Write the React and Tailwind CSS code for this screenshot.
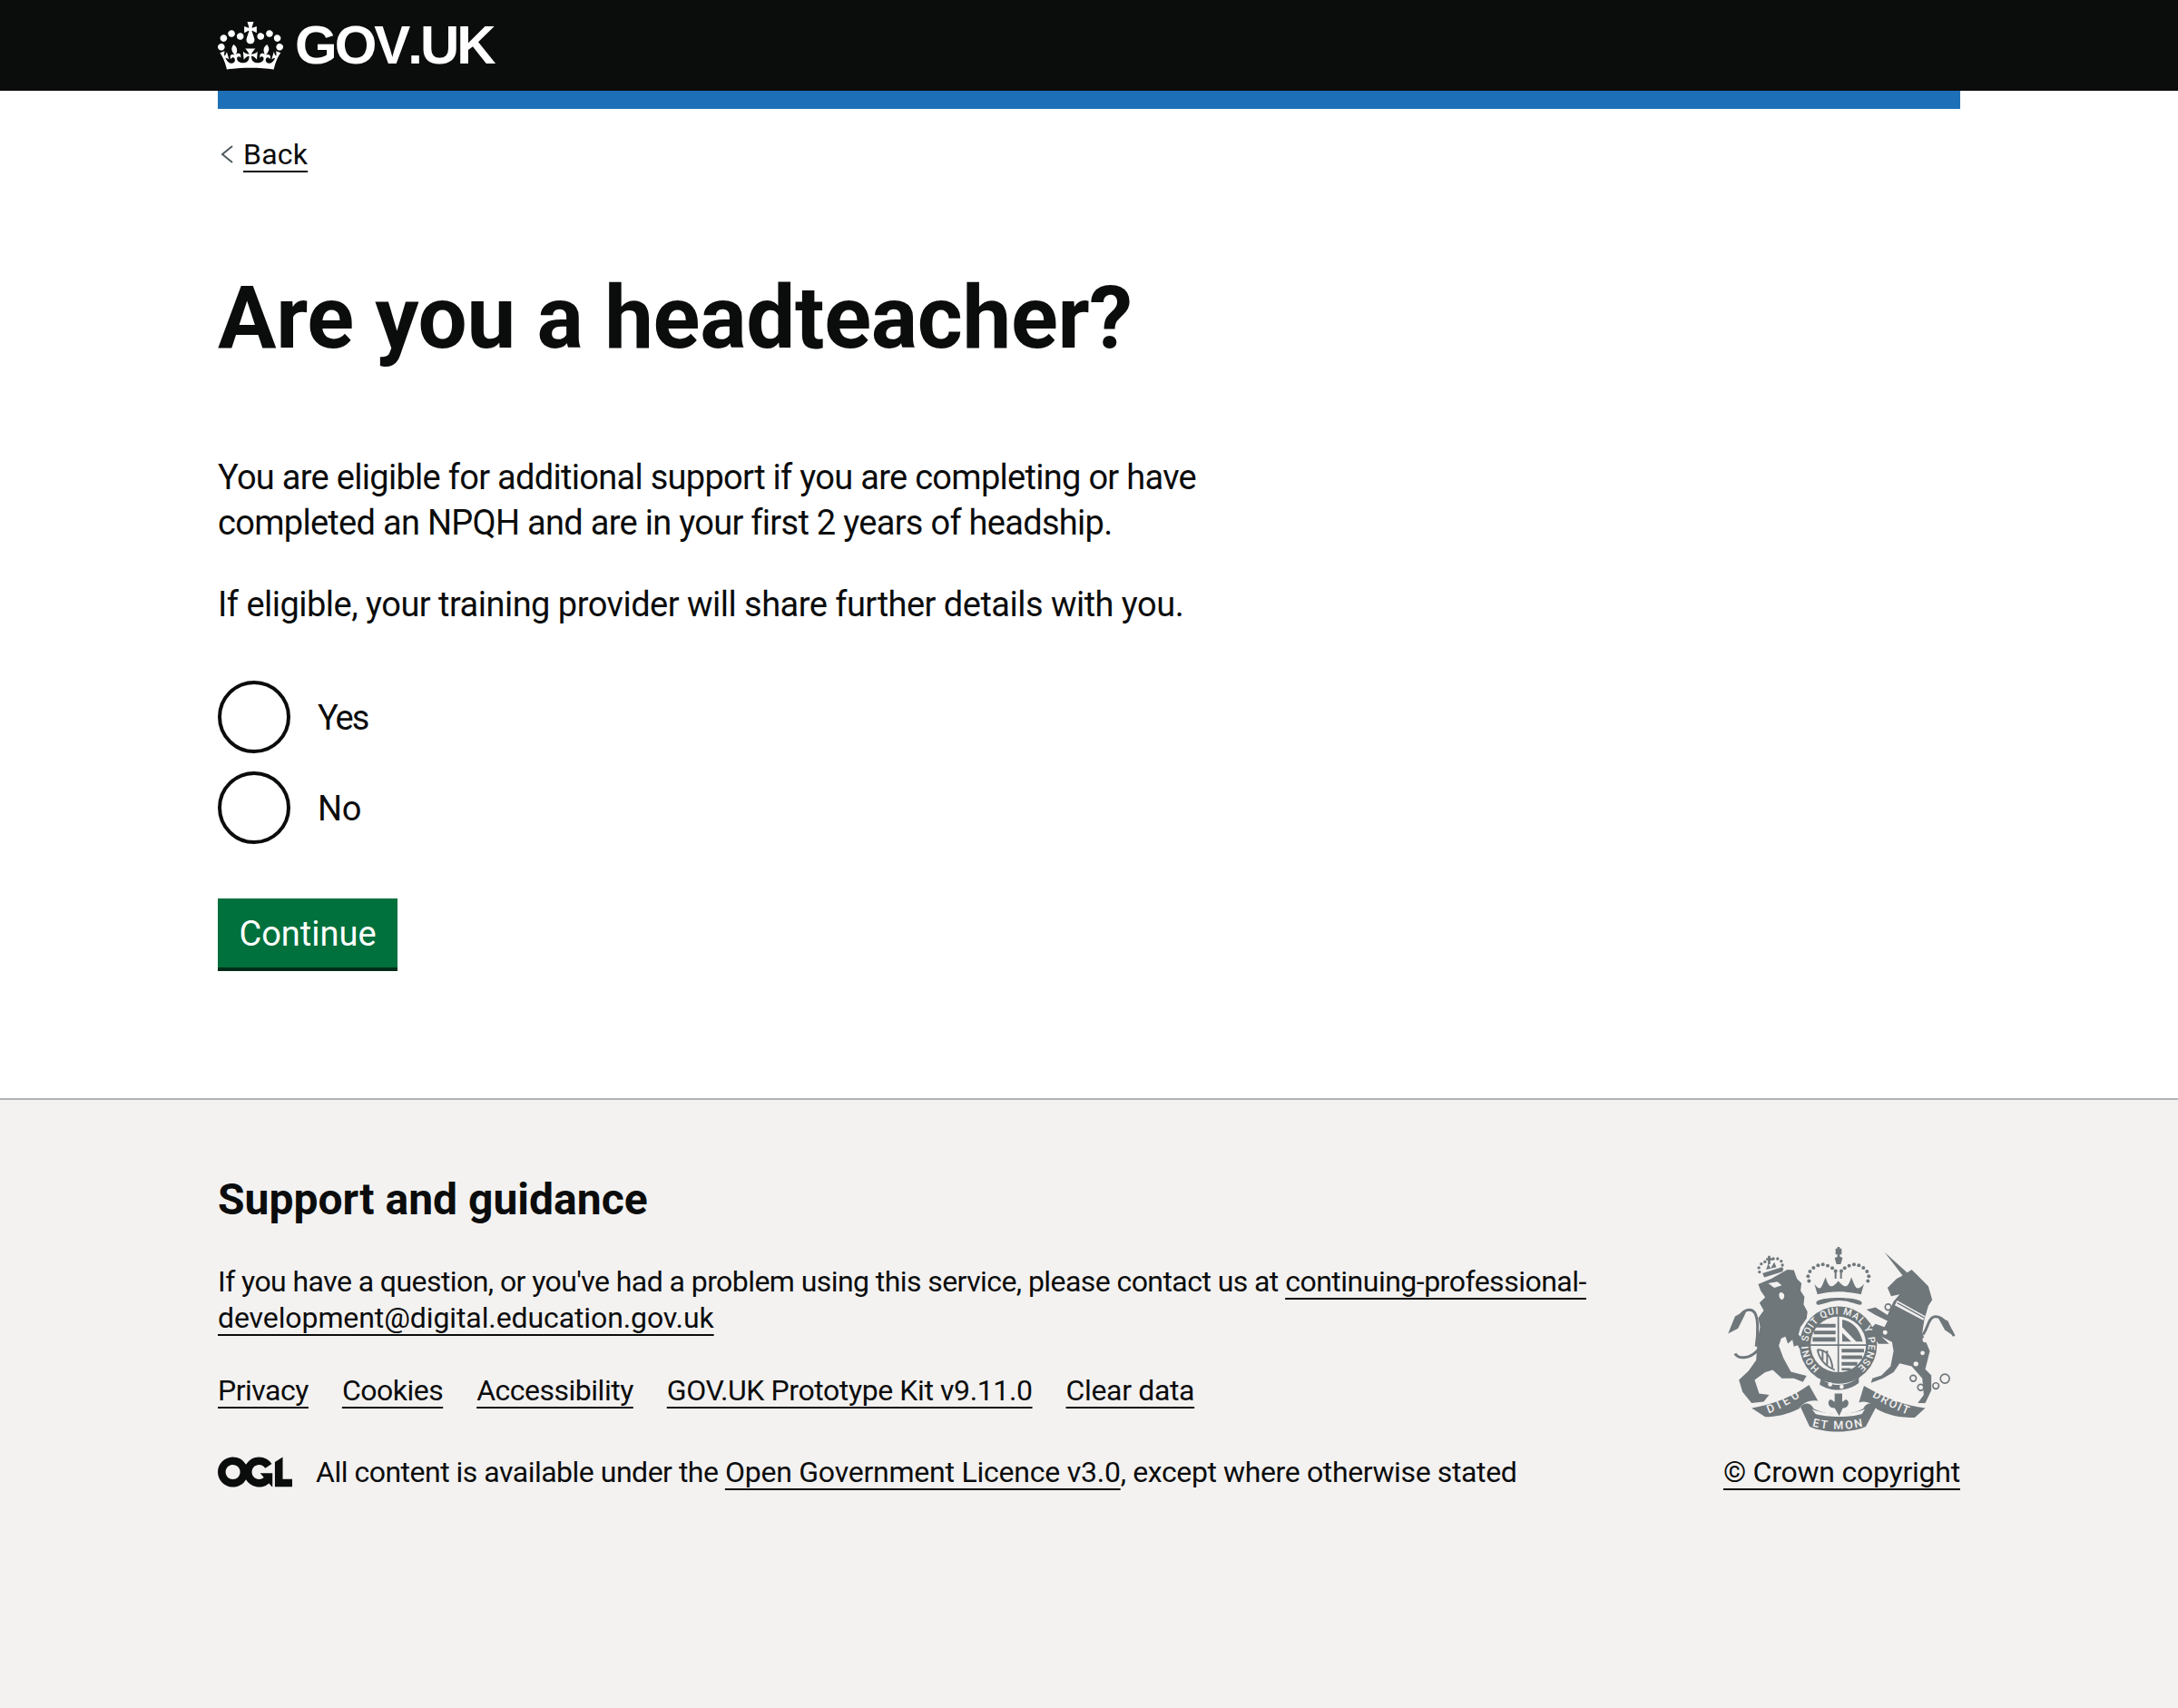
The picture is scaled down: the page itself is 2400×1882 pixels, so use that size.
const linkClass =
  "underline decoration-[2px] underline-offset-[7px] [text-decoration-skip-ink:none]";

function Crown() {
  return (
    <svg viewBox="0 0 132 97" className="w-[72px] h-[53px] fill-white">
      <path
        fillRule="evenodd"
        d="M25 30.2c3.5 1.5 7.7-.2 9.1-3.7 1.5-3.6-.2-7.8-3.9-9.2-3.6-1.4-7.6.3-9.1 3.9-1.4 3.5.3 7.5 3.9 9zM9 39.5c3.6 1.5 7.8-.2 9.2-3.7 1.5-3.6-.2-7.8-3.9-9.1-3.6-1.5-7.6.2-9.1 3.8-1.4 3.5.3 7.5 3.8 9zM4.4 57.2c3.5 1.5 7.7-.2 9.1-3.8 1.5-3.6-.2-7.7-3.9-9.1-3.5-1.5-7.6.3-9.1 3.8-1.4 3.5.3 7.6 3.9 9.1zm38.3-21.4c3.5 1.5 7.7-.2 9.1-3.8 1.5-3.6-.2-7.7-3.9-9.1-3.6-1.5-7.6.3-9.1 3.8-1.3 3.6.4 7.7 3.9 9.1zm64.4-5.6c-3.6 1.5-7.8-.2-9.1-3.7-1.5-3.6.2-7.8 3.8-9.2 3.6-1.4 7.7.3 9.2 3.9 1.3 3.5-.4 7.5-3.9 9zm15.9 9.3c-3.6 1.5-7.7-.2-9.1-3.7-1.5-3.6.2-7.8 3.7-9.1 3.6-1.5 7.7.2 9.2 3.8 1.5 3.5-.3 7.5-3.8 9zm4.7 17.7c-3.6 1.5-7.8-.2-9.2-3.8-1.5-3.6.2-7.7 3.9-9.1 3.6-1.5 7.7.3 9.2 3.8 1.3 3.5-.4 7.6-3.9 9.1zM89.3 35.8c-3.6 1.5-7.8-.2-9.2-3.8-1.4-3.6.2-7.7 3.9-9.1 3.6-1.5 7.7.3 9.2 3.8 1.4 3.6-.3 7.7-3.9 9.1zM69.7 17.7l8.9 4.7V9.3l-8.9 2.8c-.2-.3-.5-.6-.9-.9L72.4 0H59.6l3.5 11.2c-.3.3-.6.5-.9.9l-8.8-2.8v13.1l8.8-4.7c.3.3.6.7.9.9l-5 15.4v.1c-.2.8-.4 1.6-.4 2.4 0 4.1 3.1 7.5 7 8.1h.2c.3 0 .7.1 1 .1.4 0 .7 0 1-.1h.2c4-.6 7.1-4.1 7.1-8.1 0-.8-.1-1.7-.4-2.4V34l-5.1-15.4c.4-.2.7-.6 1-.9zM66 92.8c16.9 0 32.8 1.1 47.1 3.2 4-16.9 8.9-26.7 14-33.5l-9.6-3.4c1 4.9 1.1 7.2 0 10.2-1.5-1.4-3-4.3-4.2-8.7L108.6 76c2.8-2 5-3.2 7.5-3.3-4.4 9.4-10 11.9-13.6 11.2-4.3-.8-6.3-4.6-5.6-7.9 1-4.7 5.7-5.9 8-.5 4.3-8.7-3-11.4-7.6-8.8 7.1-7.2 7.9-13.5 2.1-21.1-8 6.1-8.1 12.3-4.5 20.8-4.7-5.4-12.1-2.5-9.5 6.2 3.4-5.2 7.9-2 7.2 3.1-.6 4.3-6.4 7.8-13.5 7.2-10.3-.9-10.9-8-11.2-13.8 2.5-.5 7.1 1.8 11 7.3L80.2 60c-4.1 4.4-8 5.3-12.3 5.4 1.4-4.4 8-11.6 8-11.6H55.5s6.4 7.2 7.9 11.6c-4.2-.1-8-1-12.3-5.4l1.4 16.4c3.9-5.5 8.5-7.7 10.9-7.3-.3 5.8-.9 12.8-11.1 13.8-7.2.6-12.9-2.9-13.5-7.2-.7-5 3.8-8.3 7.1-3.1 2.7-8.7-4.6-11.6-9.4-6.2 3.7-8.5 3.6-14.7-4.6-20.8-5.8 7.6-5 13.9 2.2 21.1-4.7-2.6-11.9.1-7.7 8.8 2.3-5.5 7.1-4.2 8.1.5.7 3.3-1.3 7.1-5.7 7.9-3.5.7-9-1.8-13.5-11.2 2.5.1 4.7 1.3 7.5 3.3l-4.7-15.4c-1.2 4.4-2.7 7.2-4.3 8.7-1.1-3-.9-5.3 0-10.2l-9.5 3.4c5 6.9 9.9 16.7 14 33.5 14.8-2.1 30.8-3.2 47.7-3.2z"
      />
    </svg>
  );
}

function OglLogo() {
  return (
    <svg viewBox="0 0 483.2 195.7" className="w-[82px] h-[34px] shrink-0 fill-[#0b0c0c]">
      <path d="M421.5 142.8V.1l-50.7 32.3v161.1h112.4v-50.7zm-122.3-9.6A47.12 47.12 0 0 1 221 97.8c0-26 21.1-47.1 47.1-47.1 16.7 0 31.4 8.7 39.7 21.8l42.7-27.2A97.63 97.63 0 0 0 268.1 0c-36.5 0-68.3 20.1-85.1 49.7A98 98 0 0 0 97.8 0C43.9 0 0 43.9 0 97.8s43.9 97.8 97.8 97.8c36.5 0 68.3-20.1 85.1-49.7a97.76 97.76 0 0 0 149.6 25.4l19.4 22.2h3v-87.8h-80l24.3 27.5zM97.8 145c-26 0-47.1-21.1-47.1-47.1s21.1-47.1 47.1-47.1 47.2 21 47.2 47S123.8 145 97.8 145" />
    </svg>
  );
}

// Royal arms, drawn in the coordinates of a 900px wide crop of the picture
function RoyalArms() {
  const ink = "#6f777b";
  const paper = "#f3f2f1";
  const dots = [
    [340, 168], [337, 152], [343, 136], [355, 124], [370, 116], [386, 113], [402, 117], [417, 125], [428, 135],
    [447, 135], [458, 125], [473, 117], [489, 113], [505, 116], [520, 124], [532, 136], [538, 152], [535, 168],
  ];
  const crownDots = [
    [176, 138], [174, 124], [182, 111], [194, 104], [222, 94], [236, 94], [248, 102], [252, 115], [250, 128],
  ];
  const font = "Roboto, sans-serif";
  return (
    <svg viewBox="60 40 780 640" className="w-[260px] h-[213px]">
      {/* lion */}
      <path
        fill={ink}
        d="M172 178 L215 160 L268 130 L290 132 L300 160 L315 175 L312 200 L325 220 L322 245 L335 270 L332 292 L312 320 L305 345 L332 372 L342 402 L320 410 L302 380 L290 385 L285 362 L270 375 L262 352 L248 358 L240 382 L255 422 L280 468 L332 482 L320 502 L290 490 L250 490 L220 462 L195 470 L160 495 L175 540 L208 545 L190 567 L150 572 L120 535 L108 495 L140 465 L165 430 L170 360 L178 320 L172 290 L190 265 L176 240 L195 222 L180 200 Z"
      />
      <path
        fill="none"
        stroke={ink}
        strokeWidth="9"
        d="M172 395 C140 430 105 425 95 408 M165 385 C172 340 172 290 160 272 C145 255 118 265 110 290"
      />
      <path fill={ink} d="M135 262 L95 285 L72 342 L105 325 L125 285 Z" />
      <path fill={paper} d="M205 175 L235 170 L250 182 L225 190 Z M245 205 C262 205 262 225 250 230 C240 225 238 210 245 205 Z" />
      {/* lion's crown */}
      <path fill={ink} d="M186 142 L250 122 L254 136 L192 156 Z" />
      <path fill={ink} d="M198 130 L205 110 L213 126 L225 105 L232 122 Z" />
      <path fill={ink} d="M198 92 H204 V84 H212 V92 H219 V99 H212 V112 H204 V99 H198 Z" />
      {crownDots.map(([cx, cy]) => (
        <circle key={`${cx}-${cy}`} cx={cx} cy={cy} r="5" fill={ink} />
      ))}

      {/* unicorn */}
      <path
        fill={ink}
        d="M590 72 L665 140 L680 130 L700 150 L735 185 L748 230 L735 250 L722 295 L715 340 L740 400 L725 460 L745 480 L745 530 L725 572 L700 572 L720 545 L715 490 L680 450 L640 440 L620 470 L585 490 L545 505 L550 490 L580 480 L610 450 L620 400 L615 370 L580 352 L605 376 L570 376 L540 330 L560 310 L590 320 L600 300 L560 280 L530 262 L560 255 L600 280 L620 235 L640 212 L612 218 L600 190 L630 160 L650 150 Z"
      />
      <path fill={paper} d="M632 232 L725 284 L718 298 L624 248 Z" />
      <path fill="none" stroke={ink} strokeWidth="4" d="M632 240 L722 290" />
      <path
        fill="none"
        stroke={ink}
        strokeWidth="9"
        d="M718 345 C735 320 735 290 755 286 C785 282 805 320 820 350"
      />
      <path fill={ink} d="M765 285 L800 300 L822 352 L790 330 Z" />
      <g fill={paper}>
        <circle cx="716" cy="406" r="7" />
        <circle cx="694" cy="442" r="8" />
        <circle cx="725" cy="362" r="9" />
        <circle cx="602" cy="254" r="10" stroke={ink} strokeWidth="5" />
        <circle cx="592" cy="338" r="10" stroke={ink} strokeWidth="5" />
      </g>
      <g fill="none" stroke={ink} strokeWidth="5">
        <circle cx="685" cy="490" r="10" />
        <circle cx="710" cy="520" r="10" />
        <circle cx="760" cy="515" r="10" />
        <circle cx="790" cy="491" r="15" />
      </g>

      {/* crown */}
      <path fill={ink} d="M428 60 H434 V55 H442 V60 H448 V80 H442 V90 H434 V80 H428 Z" />
      <path fill={ink} d="M425 92 C435 85 445 85 451 92 L445 112 H431 Z" />
      <rect x="425" y="130" width="6" height="30" fill={ink} />
      <rect x="443" y="130" width="6" height="30" fill={ink} />
      {dots.map(([cx, cy]) => (
        <circle key={`${cx}-${cy}`} cx={cx} cy={cy} r="6" fill={ink} />
      ))}
      <path
        fill={ink}
        d="M358 178 C380 205 380 190 395 155 C405 190 415 195 437 168 C460 195 470 190 480 155 C495 190 495 205 522 178 L512 212 C460 200 415 200 368 212 Z"
      />
      <path fill={ink} d="M364 240 C364 218 515 218 515 240 C515 258 480 232 440 232 C400 232 364 258 364 240 Z" />

      {/* garter and shield */}
      <circle cx="437" cy="380" r="128" fill={ink} />
      <circle cx="437" cy="378" r="92" fill={paper} />
      <path fill="none" stroke={ink} strokeWidth="5" d="M437 286 V470 M345 380 H530" />
      <g fill={ink}>
        <path d="M362 310 H428 V322 H362 Z M356 332 H428 V344 H356 Z M352 354 H428 V368 H352 Z" />
        <path d="M450 296 C480 300 505 320 518 368 H496 L450 320 Z M450 340 L480 368 H450 Z" />
        <path d="M448 392 H522 V404 H448 Z M448 414 H516 V426 H448 Z M448 436 H500 V448 H448 Z M448 456 H478 V464 H448 Z" />
      </g>
      <path
        fill="none"
        stroke={ink}
        strokeWidth="6"
        d="M368 395 C395 395 412 410 418 455 M385 395 V430 M400 398 V445 M368 395 C375 430 395 450 425 462"
      />
      <defs>
        <path id="garter" d="M375 456 A100 100 0 1 1 499 456" />
        <path id="dieu" d="M206 606 C250 590 285 570 318 545" />
        <path id="droit" d="M548 550 C590 575 630 597 672 612" />
        <path id="etmon" d="M350 648 C400 662 470 662 524 648" />
      </defs>
      <text fontFamily={font} fontSize="32" fontWeight="500" fill={paper}>
        <textPath href="#garter" textLength="490">
          HONI SOIT QUI MAL Y PENSE
        </textPath>
      </text>
      <path fill={ink} d="M380 490 C410 520 470 520 505 485 L505 505 C470 535 410 535 375 510 Z" />
      <circle cx="410" cy="510" r="7" fill={paper} />
      <circle cx="448" cy="518" r="7" fill={paper} />

      {/* motto */}
      <path
        fill={ink}
        d="M150 588 C210 580 290 550 340 512 L370 565 C345 560 320 570 308 590 C270 610 230 618 195 618 Z"
      />
      <path
        fill={ink}
        d="M522 515 C590 555 660 582 725 588 L690 620 C640 620 600 612 565 592 C550 572 525 562 505 570 Z"
      />
      <path
        fill={ink}
        d="M312 585 C322 570 345 568 355 590 C400 615 480 615 520 590 C530 568 552 570 562 585 L528 650 C480 672 390 672 342 650 Z"
      />
      <path fill={paper} d="M350 592 C400 612 480 612 525 592 L515 608 C480 620 400 620 362 608 Z" />
      <path fill={ink} d="M425 540 H450 V568 L462 560 C478 565 470 590 452 588 L440 615 L425 588 C405 590 397 565 412 560 L425 568 Z" />
      <text fontFamily={font} fontSize="38" fontWeight="500" fill={paper}>
        <textPath href="#dieu" textLength="118">DIEU</textPath>
      </text>
      <text fontFamily={font} fontSize="38" fontWeight="500" fill={paper}>
        <textPath href="#droit" textLength="132">DROIT</textPath>
      </text>
      <text fontFamily={font} fontSize="38" fontWeight="500" fill={paper}>
        <textPath href="#etmon" textLength="170">ET MON</textPath>
      </text>
    </svg>
  );
}

function Radio({ label, labelClass }) {
  return (
    <div className="flex items-center">
      <span className="w-20 h-20 rounded-full border-4 border-[#0b0c0c] bg-white" />
      <span className={`ml-[30px] pt-[2px] text-[38px] leading-[50px] ${labelClass}`}>{label}</span>
    </div>
  );
}

export default function App() {
  return (
    <div className="min-h-[1882px] flex flex-col bg-white text-[#0b0c0c] font-['Roboto',sans-serif]">
      <header className="h-[100px] bg-[#0b0c0c]">
        <div className="w-[1920px] mx-auto h-full flex items-center">
          <Crown />
          <span className="ml-[13px] text-[60px] leading-none font-bold text-white tracking-[-3px] [font-kerning:none] font-['Liberation_Sans',sans-serif]">
            GOV.UK
          </span>
        </div>
      </header>

      <main className="w-[1920px] mx-auto flex-none">
        <div className="h-5 bg-[#1d70b8]" />
        <div className="mt-[30px] flex items-center h-10">
          <svg viewBox="0 0 15 20" className="ml-[2px] w-[15px] h-5 fill-none stroke-[#505a5f] stroke-2">
            <path d="M14 1 L3 10 L14 19" />
          </svg>
          <a className={`ml-[11px] text-[32px] leading-10 tracking-[0.2px] ${linkClass}`}>Back</a>
        </div>

        <h1 className="mt-[110px] text-[96px] leading-[100px] font-bold tracking-[-0.3px]">
          Are you a headteacher?
        </h1>

        <p className="mt-[101px] w-[1200px] text-[38px] leading-[50px] tracking-[-0.71px]">
          You are eligible for additional support if you are completing or have completed an NPQH and are in your first 2 years of headship.
        </p>
        <p className="mt-10 text-[38px] leading-[50px] tracking-[-0.52px]">
          If eligible, your training provider will share further details with you.
        </p>

        <div className="mt-[59px] flex flex-col gap-5">
          <Radio label="Yes" labelClass="tracking-[-2px]" />
          <Radio label="No" labelClass="tracking-[-0.3px]" />
        </div>

        <button className="mt-[60px] w-[198px] h-20 pt-[1px] bg-[#00703c] border-b-4 border-[#002d18] text-white text-[38px] leading-none tracking-[0px]">
          Continue
        </button>
      </main>

      <footer className="mt-[140px] flex-1 bg-[#f3f2f1] border-t-2 border-[#b1b4b6] pt-20">
        <div className="w-[1920px] mx-auto flex items-end justify-between">
          <div className="w-[1530px] text-[32px] leading-10 tracking-[-0.57px]">
            <h2 className="text-[48px] leading-[60px] font-bold tracking-[0px]">Support and guidance</h2>
            <p className="mt-10">
              If you have a question, or you've had a problem using this service, please contact us at{" "}
              <a className={`tracking-[-0.5px] ${linkClass}`}>
                continuing-professional-<span className="tracking-[-0.1px]">development@digital.education.gov.uk</span>
              </a>
            </p>
            <ul className="mt-10 flex gap-[37px] tracking-[-0.5px]">
              <li><a className={linkClass}>Privacy</a></li>
              <li><a className={linkClass}>Cookies</a></li>
              <li><a className={linkClass}>Accessibility</a></li>
              <li><a className={`tracking-[-0.4px] ${linkClass}`}>GOV.UK Prototype Kit v9.11.0</a></li>
              <li><a className={`tracking-[-0.35px] ${linkClass}`}>Clear data</a></li>
            </ul>
            <div className="mt-[50px] flex items-center gap-[26px] tracking-[-0.5px]">
              <OglLogo />
              <span>
                All content is available under the <a className={`tracking-[-0.23px] ${linkClass}`}>Open Government Licence v3.0</a>
                <span className="tracking-[-0.38px]">, except where otherwise stated</span>
              </span>
            </div>
          </div>
          <div className="flex flex-col items-end text-[32px] leading-10 tracking-[-0.23px]">
            <RoyalArms />
            <a className={`mt-5 ${linkClass}`}>© Crown copyright</a>
          </div>
        </div>
      </footer>
    </div>
  );
}
